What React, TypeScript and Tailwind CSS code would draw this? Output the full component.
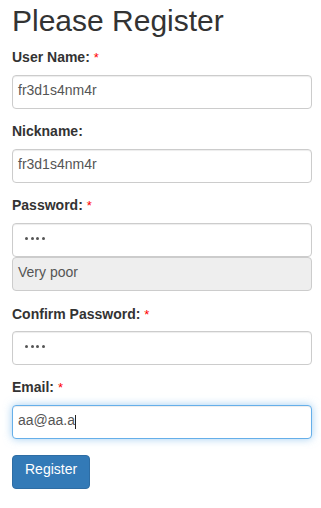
import React from "react";

function Star() {
  return <span className="text-[#f00] font-normal text-[13px]">*</span>;
}

function Label({ text, required }: { text: string; required?: boolean }) {
  return (
    <div className="h-5 leading-5 font-bold text-[14px] text-[#333] mb-2">
      {text}
      {required && (
        <>
          {" "}
          <Star />
        </>
      )}
    </div>
  );
}

function TextBox({ value }: { value: string }) {
  return (
    <div className="h-[34px] w-full border border-[#ccc] rounded-[4px] bg-white shadow-[inset_0_1px_1px_rgba(0,0,0,0.075)] pl-[5px] pt-[4px] leading-5 text-[14px] text-[#555]">
      {value}
    </div>
  );
}

function PasswordBox() {
  return (
    <div className="h-[34px] w-full border border-[#ccc] rounded-[4px] bg-white shadow-[inset_0_1px_1px_rgba(0,0,0,0.075)] pl-3 pb-[3px] flex items-center gap-[2.5px]">
      <div className="w-[3px] h-[3px] rounded-full bg-[#555]" />
      <div className="w-[3px] h-[3px] rounded-full bg-[#555]" />
      <div className="w-[3px] h-[3px] rounded-full bg-[#555]" />
      <div className="w-[3px] h-[3px] rounded-full bg-[#555]" />
    </div>
  );
}

export default function App() {
  return (
    <div className="font-['Liberation_Sans',Arial,sans-serif] text-[14px] text-[#333] bg-white min-h-[508px] w-full pl-3 pr-[9px] pt-1">
      <h2 className="text-[30px] leading-[33px] font-normal text-[#333] mb-[10px]">
        Please Register
      </h2>

      <div className="mb-3">
        <Label text="User Name:" required />
        <TextBox value="fr3d1s4nm4r" />
      </div>

      <div className="mb-3">
        <Label text="Nickname:" />
        <TextBox value="fr3d1s4nm4r" />
      </div>

      <div className="mb-[13px]">
        <Label text="Password:" required />
        <PasswordBox />
        <div className="h-[34px] w-full border border-[#ccc] rounded-[4px] bg-[#eee] pl-[5px] pt-[4px] leading-5 text-[14px] text-[#555]">
          Very poor
        </div>
      </div>

      <div className="mb-3">
        <div className="h-5 leading-5 font-bold text-[14px] text-[#333] mb-[7px]">
          Confirm Password: <Star />
        </div>
        <PasswordBox />
      </div>

      <div className="mb-4">
        <Label text="Email:" required />
        <div className="h-[34px] w-full border border-[#66afe9] rounded-[4px] bg-white shadow-[inset_0_1px_1px_rgba(0,0,0,0.075),0_0_8px_rgba(102,175,233,0.6)] pl-[5px] pt-[4px] leading-5 text-[14px] text-[#555]">
          aa@aa.a
          <span className="inline-block w-px h-[14px] bg-[#222] align-[-4px]" />
        </div>
      </div>

      <button
        type="button"
        className="h-[34px] px-3 pb-[6px] leading-5 text-[14px] text-white bg-[#337ab7] border border-[#2e6da4] rounded-[4px]"
      >
        Register
      </button>
    </div>
  );
}
